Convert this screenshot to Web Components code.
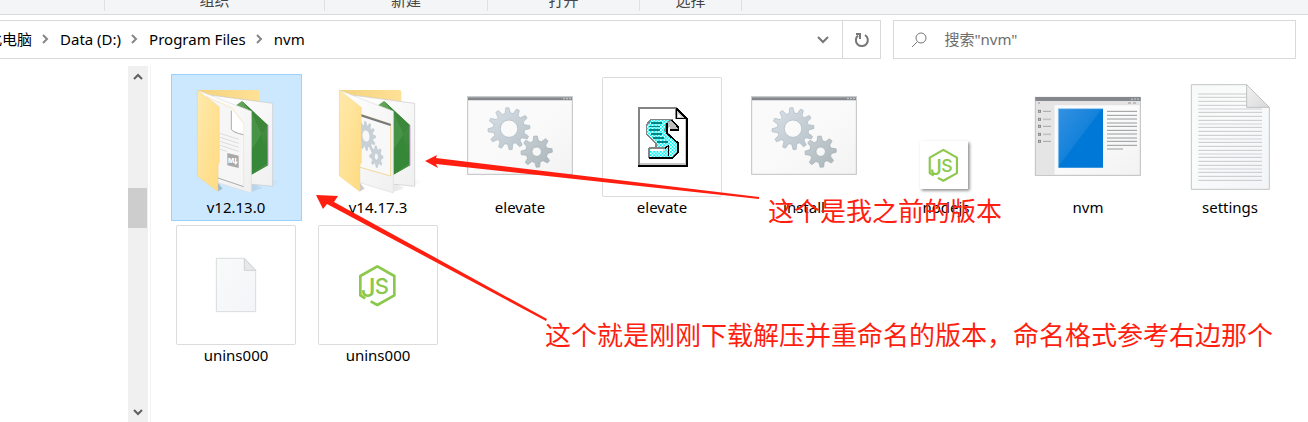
<!DOCTYPE html>
<html lang="zh-CN">
<head>
<meta charset="utf-8">
<title>nvm</title>
<style>
    body {
        margin: 0;
        background: #fff;
        color: #000;
        font: 15px/20px "Noto Sans", "Noto Sans CJK SC", sans-serif;
    }
</style>
</head>
<body>
<explorer-window>
    <ribbon-bar slot="ribbon">
        <ribbon-group style="width: 104px"></ribbon-group>
        <ribbon-group style="width: 219px">组织</ribbon-group>
        <ribbon-group style="width: 162px">新建</ribbon-group>
        <ribbon-group style="width: 151px">打开</ribbon-group>
        <ribbon-group style="width: 101px">选择</ribbon-group>
    </ribbon-bar>
    <address-bar slot="address">
        <crumb-link>此电脑</crumb-link>
        <crumb-link>Data (D:)</crumb-link>
        <crumb-link>Program Files</crumb-link>
        <crumb-link last>nvm</crumb-link>
    </address-bar>
    <search-box slot="search" placeholder='搜索"nvm"'></search-box>
    <nav-scrollbar slot="nav"></nav-scrollbar>
    <file-tile icon="folder-md" selected>v12.13.0</file-tile>
    <file-tile icon="folder-gears">v14.17.3</file-tile>
    <file-tile icon="gears">elevate</file-tile>
    <file-tile icon="script" framed>elevate</file-tile>
    <file-tile icon="gears">install</file-tile>
    <file-tile icon="node-card">nodejs</file-tile>
    <file-tile icon="app">nvm</file-tile>
    <file-tile icon="text">settings</file-tile>
    <file-tile icon="blank" framed>unins000</file-tile>
    <file-tile icon="node" framed>unins000</file-tile>
    <arrow-note slot="notes" style="left: 768px; top: 191px">这个是我之前的版本</arrow-note>
    <arrow-note slot="notes" style="left: 545px; top: 315px">这个就是刚刚下载解压并重命名的版本，命名格式参考右边那个</arrow-note>
</explorer-window>

<script>
    // closed path for a cog with a round hole
    function gear(cx, cy, outer, inner, hole, teeth) {
        const step = Math.PI * 2 / teeth;
        const points = [];
        for (let i = 0; i < teeth; i++) {
            const a = i * step - Math.PI / 2 - 0.08;
            [[-0.32, inner], [-0.14, outer], [0.14, outer], [0.32, inner]].forEach(([t, r]) => {
                points.push((cx + Math.cos(a + t * step) * r).toFixed(1) + ' ' + (cy + Math.sin(a + t * step) * r).toFixed(1));
            });
        }
        return `<path fill-rule="evenodd" stroke-linejoin="round" d="M${points.join('L')}Z
            M${cx - hole} ${cy}a${hole} ${hole} 0 1 0 ${hole * 2} 0a${hole} ${hole} 0 1 0 ${-hole * 2} 0Z"/>`;
    }

    function lines(x1, x2, ys, color, width) {
        return ys.map(y => `<path d="M${x1} ${y}H${x2}" stroke="${color}" stroke-width="${width}"/>`).join('');
    }

    const nodeLogo = `
        <path d="M736 250L721 241V183L772 154L823 183V241L772 270L752 259" fill="none" stroke="#8cc84b" stroke-width="8" stroke-linejoin="round"/>
        <text font-family="Inter, sans-serif" font-weight="500" fill="#8cc84b"><tspan x="722" y="247" font-size="78">J</tspan><tspan x="764" y="236" font-size="66">S</tspan></text>`;

    const folder = inside => `
        <defs>
            <linearGradient id="front" x2="1" y2="1"><stop stop-color="#ffe9ab"/><stop offset="1" stop-color="#ffdb82"/></linearGradient>
            <linearGradient id="back" x2="1"><stop stop-color="#f4d27c"/><stop offset="1" stop-color="#ffe197"/></linearGradient>
            <linearGradient id="green" x2="1" y2="1"><stop stop-color="#6aa85f"/><stop offset="1" stop-color="#2c7d31"/></linearGradient>
            <linearGradient id="shade" x2="1"><stop stop-color="#000" stop-opacity=".2"/><stop offset="1" stop-color="#000" stop-opacity="0"/></linearGradient>
            <linearGradient id="sheet" x2="1" y2="1"><stop stop-color="#fff"/><stop offset="1" stop-color="#f0f0f0"/></linearGradient>
        </defs>
        <path d="M274 378L308 366L274 350ZM338 360L364 346L338 340ZM174 376L188 368L174 350Z" fill="url(#shade)"/>
        <path d="M112 72H292Q298 72 298 78V330H112Z" fill="url(#back)"/>
        <path d="M156 88L338 112V361L250 352Z" fill="url(#sheet)" stroke="#c9c9c9" stroke-width="2"/>
        <path d="M222 122L246 105L324 178V298L274 326V150Z" fill="url(#green)"/>
        <path d="M246 105L324 178L305 205L274 140Z" fill="#3d873b"/>
        <path d="M274 140L305 205L324 298L274 326Z" fill="#469246"/>
        <path d="M305 205L274 252V326L324 290Z" fill="#378739"/>
        <path d="M324 178V298" stroke="#db9bdd" stroke-width="3"/>
        <path d="M116 74L274 136V381L174 350Z" fill="url(#sheet)" stroke="#dedede" stroke-width="2"/>
        ${inside}
        <path d="M112 72L178 124V290Q174 292 174 300V377L112 330Z" fill="url(#front)" stroke="#efce78" stroke-width="1"/>`;

    const gearWindow = `
        <defs>
            <linearGradient id="pane" x2="1" y2="1"><stop offset=".5" stop-color="#fafafa"/><stop offset="1" stop-color="#f3f3f3"/></linearGradient>
            <linearGradient id="metal" x2="1" y2="1"><stop stop-color="#d8e0e7"/><stop offset="1" stop-color="#b7c1c8"/></linearGradient>
            <linearGradient id="metal2" x2="1" y2="1"><stop stop-color="#c8d0d5"/><stop offset="1" stop-color="#aab5b9"/></linearGradient>
        </defs>
        <rect x="23" y="92" width="314" height="233" fill="url(#pane)" stroke="#bfc1c3" stroke-width="3"/>
        <path d="M24 98H336" stroke="#84888c" stroke-width="9"/>
        <path d="M309 98H315M318 98H324M327 98H333" stroke="#bfc3c6" stroke-width="4"/>
        <g fill="url(#metal)" stroke="#aab8c1" stroke-width="2">${gear(147, 188, 63, 47, 26, 12)}</g>
        <g fill="url(#metal2)" stroke="#a0adb4" stroke-width="2">${gear(230, 257, 47, 33, 14, 8)}</g>`;

    const icons = {
        'folder-md': ['48 33 360 360', folder(`
            <path d="M140 92L216 126L251 172V362L174 336V120Z" fill="#f6f6f6" stroke="#f4e2b4" stroke-width="2"/>
            <path d="M174 336L251 362" stroke="#a9b0b5" stroke-width="3"/>
            <path d="M214 130V186Q216 195 250 204V174Z" fill="#fff"/>
            <path d="M214 134V190Q218 199 250 206" fill="none" stroke="#aaa" stroke-width="3"/>
            <path d="M180 202L236 220M180 214L236 232M180 226L236 244M180 238L236 256M180 250L200 256" stroke="#dcdcdc" stroke-width="3"/>
            <path d="M202 261L236 269V306L202 298Z" fill="#a9a9a9"/>
            <text x="204" y="292" font-family="Inter, sans-serif" font-size="20" font-weight="800" fill="#fff">M</text>
            <path d="M227 276V290" stroke="#fff" stroke-width="4"/><path d="M221 287H234L227 297Z" fill="#fff"/>`)],
        'folder-gears': ['48 33 360 360', folder(`
            <path d="M174 144L266 174V330L174 304" fill="#f8f8f8" stroke="#f1d998" stroke-width="3"/>
            <path d="M174 147L266 177" stroke="#75797b" stroke-width="7"/>
            <g fill="#c8d1d8" stroke="#b8c3cb" stroke-width="2">
                <g transform="translate(192 210) skewY(12) scale(.66 1)">${gear(0, 0, 43, 32, 18, 12)}</g>
                <g transform="translate(223 272) skewY(12) scale(.62 1)">${gear(0, 0, 32, 23, 10, 8)}</g>
            </g>`)],
        gears: ['0 33 360 360', gearWindow],
        script: ['21 33 360 360', `
            <defs><pattern id="dots" width="10" height="10" patternUnits="userSpaceOnUse"><rect width="10" height="10" fill="#e9ffff"/><path d="M0 0H5V5H0ZM5 5H10V10H5Z" fill="#00f5f5"/></pattern></defs>
            <g shape-rendering="crispEdges">
                <path d="M131 126H244L276 158V299H131Z" fill="#fff" stroke="#848484" stroke-width="5"/>
                <path d="M134 294H272V160" fill="none" stroke="#c6c6c6" stroke-width="5"/>
                <path d="M129 299H276V158L247 128" fill="none" stroke="#000" stroke-width="5"/>
                <path d="M244 128V158H274Z" fill="#c6c6c6" stroke="#000" stroke-width="4"/>
                <path d="M242 126V160" stroke="#848484" stroke-width="4"/>
                <path d="M248 142L260 154H248Z" fill="#fff"/>
                <path d="M168 160H230L214 174L210 194L248 232V258L234 274H162V248H182V232L154 204V178Z" fill="url(#dots)" stroke="#848484" stroke-width="5"/>
                <path d="M216 172L230 164L248 184V190H224V182L214 192Z" fill="#bdbdbd"/>
                <path d="M230 162L250 184V192H226M216 172V202L248 230V260L232 276H162M210 246L220 240V270" fill="none" stroke="#000" stroke-width="5"/>
                <path d="M164 248H210V270H164Z" fill="url(#dots)"/>
                <path d="M162 246H210M160 248V272" fill="none" stroke="#848484" stroke-width="5"/>
                <path d="M168 252H204" stroke="#fff" stroke-width="6"/>
                <path d="M168 171H202M162 181H196M162 191H196M168 203H202M174 215H208M186 227H218" stroke="#008484" stroke-width="5"/>
            </g>`],
        'node-card': ['438 33 360 360', `
            <defs><filter id="drop" x="-20%" y="-20%" width="140%" height="140%"><feDropShadow dx="5" dy="5" stdDeviation="4" flood-opacity=".45"/></filter></defs>
            <rect x="540" y="225" width="144" height="144" fill="#fff" filter="url(#drop)"/>
            <g transform="translate(610 298) scale(.8) translate(-772 -212)">${nodeLogo}</g>`],
        app: ['24 33 360 360', `
            <defs>
                <linearGradient id="blue" x2="1" y2="1"><stop stop-color="#3491e1"/><stop offset=".48" stop-color="#1482da"/><stop offset=".5" stop-color="#0078d7"/></linearGradient>
                <linearGradient id="pane" x2="1" y2="1"><stop offset=".5" stop-color="#fbfbfb"/><stop offset="1" stop-color="#f2f2f2"/></linearGradient>
            </defs>
            <rect x="46" y="94" width="315" height="234" fill="url(#pane)" stroke="#bcbec0" stroke-width="3"/>
            <path d="M48 111H360" stroke="#e4e4e4" stroke-width="13"/>
            <path d="M48 117H104V327H48Z" fill="#e5e5e5"/>
            <path d="M46 99H362" stroke="#84888c" stroke-width="12"/>
            <path d="M333 100H339M342 99H348M351 99H357" stroke="#b2b6b9" stroke-width="5"/>
            <path d="M54 111H60M324 111H333M339 111H348" stroke="#bdbdbd" stroke-width="6"/>
            <path d="M115 128H249V305H115Z" fill="url(#blue)"/>
            <path d="M115 305V128H249" fill="none" stroke="#8fc8f4" stroke-width="2"/>
            ${lines(54, 63, [136, 160, 181, 205, 226], '#8a8a8a', 9)}
            ${lines(57, 60, [136, 160, 181, 205, 226], '#d0d0d0', 3)}
            ${lines(69, 93, [136, 181, 226], '#a2a4a6', 3)}
            ${lines(69, 93, [160, 205], '#c2c2c2', 5)}
            ${lines(261, 351, [136, 148, 181, 193, 226, 238], '#97999b', 3)}
            ${lines(261, 351, [159, 171, 204, 216], '#bfc0c1', 5)}
            ${lines(261, 309, [249], '#bfc0c1', 5)}`],
        text: ['30 33 360 360', `
            <defs>
                <linearGradient id="paper" x2="1" y2="1"><stop stop-color="#f8f9f9"/><stop offset=".4" stop-color="#fafbfb"/><stop offset="1" stop-color="#f2f4f7"/></linearGradient>
                <linearGradient id="fold" x2="1" y2="1"><stop stop-color="#f2f2f2"/><stop offset="1" stop-color="#d9d9d9"/></linearGradient>
            </defs>
            <path d="M94 56H260L328 124V370H94Z" fill="url(#paper)" stroke="#c2c4c5" stroke-width="3"/>
            ${lines(115, 260, [84, 94, 106, 118], '#cacccd', 3)}
            ${lines(115, 306, [129, 174, 219, 264, 309], '#dcdee0', 5)}
            ${lines(115, 306, [139, 151, 163, 184, 196, 208, 229, 241, 253, 274, 286, 298, 319, 331, 343], '#c6c8ca', 3)}
            <path d="M260 56V124H328Z" fill="url(#fold)" stroke="#bfc1c2" stroke-width="3"/>`],
        blank: ['168 30 360 360', `
            <defs><linearGradient id="paper" x2="1" y2="1"><stop stop-color="#f9fafa"/><stop offset="1" stop-color="#f3f5f8"/></linearGradient></defs>
            <path d="M289 130H373L407 166V290H289Z" fill="url(#paper)" stroke="#d9dbdc" stroke-width="3"/>
            <path d="M373 130V166H407Z" fill="#e7e8e9" stroke="#cfd1d2" stroke-width="3"/>`],
        node: ['594 30 360 360', nodeLogo]
    };

    class ExplorerWindow extends HTMLElement {
        connectedCallback() {
            this.attachShadow({ mode: 'open' });
            this.shadowRoot.innerHTML = `
                <style>
                    :host {
                        display: flex;
                        flex-direction: column;
                        min-height: 100vh;
                        position: relative;
                        overflow: hidden;
                    }
                    .location {
                        display: grid;
                        grid-template-columns: 219fr 100fr;
                        gap: 12px;
                        padding: 5px 12px 7px 0;
                    }
                    .body {
                        display: flex;
                        flex: 1;
                    }
                    nav {
                        display: flex;
                        justify-content: flex-end;
                        width: 148px;
                        flex-shrink: 0;
                    }
                    main {
                        flex: 1;
                        display: grid;
                        grid-template-columns: repeat(auto-fill, 131px);
                        align-content: start;
                        gap: 1px 11px;
                        margin-left: 2px;
                        padding: 8px 0 0 20px;
                        border-left: 1px solid #f3f3f3;
                    }
                    .arrows {
                        position: absolute;
                        left: 0;
                        top: 0;
                        pointer-events: none;
                    }
                </style>
                <slot name="ribbon"></slot>
                <div class="location">
                    <slot name="address"></slot>
                    <slot name="search"></slot>
                </div>
                <div class="body">
                    <nav><slot name="nav"></slot></nav>
                    <main><slot></slot></main>
                </div>
                <svg class="arrows" width="800" height="340" fill="#ff1e10" aria-hidden="true">
                    <path d="M425 161L437 155L436 158L759 197L759 199L436 164L438 168Z"/>
                    <path d="M316 195L338 196L334 202L547 319L546 321L327 204L323 209Z"/>
                </svg>
                <slot name="notes"></slot>
            `;
        }
    }

    class RibbonBar extends HTMLElement {
        connectedCallback() {
            this.attachShadow({ mode: 'open' });
            this.shadowRoot.innerHTML = `
                <style>
                    :host {
                        display: flex;
                        height: 14px;
                        background: #f4f5f7;
                        border-bottom: 1px solid #d9dadb;
                    }
                </style>
                <slot></slot>
            `;
        }
    }

    class RibbonGroup extends HTMLElement {
        connectedCallback() {
            this.attachShadow({ mode: 'open' });
            this.shadowRoot.innerHTML = `
                <style>
                    :host {
                        display: flex;
                        align-items: flex-end;
                        justify-content: center;
                        height: 11px;
                        overflow: hidden;
                        border-right: 1px solid #dfe0e1;
                        color: #444;
                        line-height: 22px;
                    }
                </style>
                <slot></slot>
            `;
        }
    }

    class AddressBar extends HTMLElement {
        connectedCallback() {
            this.attachShadow({ mode: 'open' });
            this.shadowRoot.innerHTML = `
                <style>
                    :host {
                        display: flex;
                        height: 37px;
                        overflow: hidden;
                        border: 1px solid #d9d9d9;
                        border-left: 0;
                    }
                    .path {
                        display: flex;
                        flex: 1;
                        align-items: center;
                        margin-left: -13px;
                        padding-bottom: 2px;
                    }
                    button {
                        display: grid;
                        place-items: center;
                        width: 38px;
                        padding: 0;
                        border: 0;
                        background: none;
                    }
                    .refresh {
                        border-left: 1px solid #d9d9d9;
                    }
                    svg {
                        fill: none;
                        stroke: #777;
                        stroke-width: 2;
                    }
                </style>
                <div class="path"><slot></slot></div>
                <button aria-label="展开"><svg width="12" height="8"><path d="M1 1L6 6L11 1"/></svg></button>
                <button class="refresh" aria-label="刷新">
                    <svg width="16" height="16"><path d="M11 3A6 6 0 1 1 4 3.500M2 2H6V7"/></svg>
                </button>
            `;
        }
    }

    class CrumbLink extends HTMLElement {
        connectedCallback() {
            this.attachShadow({ mode: 'open' });
            this.shadowRoot.innerHTML = `
                <style>
                    :host {
                        display: flex;
                        align-items: center;
                        white-space: nowrap;
                    }
                    a {
                        color: inherit;
                        text-decoration: none;
                    }
                    svg {
                        margin: 0 10px;
                        fill: none;
                        stroke: #868686;
                        stroke-width: 2;
                    }
                    :host([last]) svg {
                        display: none;
                    }
                </style>
                <a href="#"><slot></slot></a>
                <svg width="8" height="10"><path d="M1 1L5 5L1 9"/></svg>
            `;
        }
    }

    class SearchBox extends HTMLElement {
        connectedCallback() {
            this.attachShadow({ mode: 'open' });
            this.shadowRoot.innerHTML = `
                <style>
                    :host {
                        display: flex;
                        align-items: center;
                        gap: 17px;
                        height: 37px;
                        padding-left: 17px;
                        border: 1px solid #d9d9d9;
                    }
                    input {
                        flex: 1;
                        min-width: 0;
                        padding: 0 0 2px;
                        border: 0;
                        outline: 0;
                        font: inherit;
                    }
                    input::placeholder {
                        color: #6d6d6d;
                        opacity: 1;
                    }
                </style>
                <svg width="16" height="16" fill="none" stroke="#777"><circle cx="10" cy="6" r="5"/><path d="M6 10L1 15"/></svg>
                <input type="text" aria-label="搜索">
            `;
            this.shadowRoot.querySelector('input').placeholder = this.getAttribute('placeholder');
        }
    }

    class NavScrollbar extends HTMLElement {
        connectedCallback() {
            this.attachShadow({ mode: 'open' });
            this.shadowRoot.innerHTML = `
                <style>
                    :host {
                        display: flex;
                        flex-direction: column;
                        width: 20px;
                        background: #f0f0f0;
                    }
                    button {
                        display: grid;
                        place-items: center;
                        height: 20px;
                        padding: 0;
                        border: 0;
                        background: none;
                    }
                    .track {
                        flex: 1;
                    }
                    .thumb {
                        width: 19px;
                        height: 40px;
                        margin-top: 102px;
                        background: #cdcdcd;
                    }
                    svg {
                        fill: none;
                        stroke: #606060;
                        stroke-width: 2;
                    }
                </style>
                <button aria-label="向上"><svg width="10" height="7"><path d="M1 6L5 2L9 6"/></svg></button>
                <div class="track"><div class="thumb"></div></div>
                <button aria-label="向下"><svg width="10" height="7"><path d="M1 1L5 5L9 1"/></svg></button>
            `;
        }
    }

    class FileTile extends HTMLElement {
        connectedCallback() {
            const [box, art] = icons[this.getAttribute('icon')];
            this.attachShadow({ mode: 'open' });
            this.shadowRoot.innerHTML = `
                <style>
                    :host {
                        display: block;
                    }
                    button {
                        display: flex;
                        flex-direction: column;
                        align-items: center;
                        box-sizing: border-box;
                        width: 100%;
                        height: 147px;
                        padding: 2px 5px 0 4px;
                        border: 1px solid transparent;
                        background: none;
                        color: inherit;
                        font: inherit;
                    }
                    :host([selected]) button {
                        background: #cce8ff;
                        border-color: #99d1ff;
                    }
                    svg {
                        width: 120px;
                        height: 120px;
                    }
                    .thumb {
                        display: flex;
                    }
                    :host([framed]) .thumb {
                        border-radius: 2px;
                        box-shadow: inset 0 0 0 1px #dcdcdc;
                    }
                </style>
                <button>
                    <span class="thumb"><svg viewBox="${box}" aria-hidden="true">${art}</svg></span>
                    <span><slot></slot></span>
                </button>
            `;
        }
    }

    class ArrowNote extends HTMLElement {
        connectedCallback() {
            this.attachShadow({ mode: 'open' });
            this.shadowRoot.innerHTML = `
                <style>
                    :host {
                        position: absolute;
                        color: #ff1e10;
                        font-family: "Noto Sans CJK SC", sans-serif;
                        font-size: 26px;
                        line-height: 38px;
                        white-space: nowrap;
                    }
                </style>
                <slot></slot>
            `;
        }
    }

    customElements.define('explorer-window', ExplorerWindow);
    customElements.define('ribbon-bar', RibbonBar);
    customElements.define('ribbon-group', RibbonGroup);
    customElements.define('address-bar', AddressBar);
    customElements.define('crumb-link', CrumbLink);
    customElements.define('search-box', SearchBox);
    customElements.define('nav-scrollbar', NavScrollbar);
    customElements.define('file-tile', FileTile);
    customElements.define('arrow-note', ArrowNote);
</script>
</body>
</html>
